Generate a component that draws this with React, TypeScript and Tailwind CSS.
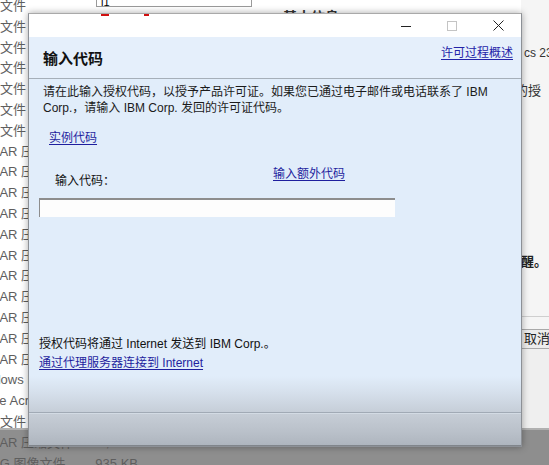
import React from "react";

type Row = { name: string; shift: string; size?: string };

const rows: Row[] = [
  ...Array.from({ length: 7 }, () => ({ name: "文件", shift: "ml-0" })),
  ...Array.from({ length: 11 }, () => ({ name: "RAR 压缩文件", shift: "ml-[-10px]" })),
  { name: "Windows Installer", shift: "ml-[-29px]" },
  { name: "Adobe Acrobat", shift: "ml-[-31px]" },
  { name: "文件", shift: "ml-0" },
  { name: "RAR 压缩文件", shift: "ml-[-10px]", size: "38,000 KB" },
  { name: "JPEG 图像文件", shift: "ml-[-24px]", size: "935 KB" },
];

function TitleButtons() {
  return (
    <div className="flex h-[23px] bg-white">
      <div className="relative flex-1">
        <span className="block ml-[72px] mt-[0px] h-[2px] w-[8px] bg-[#d01010]" />
        <span className="block ml-[115px] mt-[-2px] h-[2px] w-[5px] bg-[#d01010]" />
      </div>
      <div className="w-[46px] flex items-center justify-center">
        <svg width="10" height="10" viewBox="0 0 10 10">
          <line x1="0" y1="5.5" x2="10" y2="5.5" stroke="#222" strokeWidth="1" />
        </svg>
      </div>
      <div className="w-[46px] flex items-center justify-center">
        <svg width="10" height="10" viewBox="0 0 10 10">
          <rect x="0.5" y="0.5" width="9" height="9" fill="none" stroke="#c4c4c4" strokeWidth="1" />
        </svg>
      </div>
      <div className="w-[46px] flex items-center justify-center">
        <svg width="11" height="11" viewBox="0 0 11 11">
          <path d="M0.5 0.5 L10.5 10.5 M10.5 0.5 L0.5 10.5" stroke="#222" strokeWidth="1" />
        </svg>
      </div>
    </div>
  );
}

export default function App() {
  return (
    <div className="relative w-[549px] h-[465px] overflow-hidden bg-[#8e8e8e] font-['Liberation_Sans','Noto_Sans_CJK_SC',sans-serif]">
      {/* background explorer window */}
      <div className="flex h-[430px] max-h-[430px] bg-white border-b-2 border-[#b0b0b0]">
        <div className="w-[96px] h-[430px] flex flex-col mt-[-4px] text-[13px] leading-[20.8px] text-[#5e5e5e] whitespace-nowrap">
          {rows.map((r, i) => (
            <div key={i} className="flex h-[20.8px] shrink-0">
              <span className={`${r.shift} w-[96px] shrink-0`}>{r.name}</span>
              {r.size ? (
                <span className="w-[66px] shrink-0 text-right">{r.size}</span>
              ) : null}
            </div>
          ))}
        </div>
        <div className="w-[156px] flex flex-col">
          <div className="h-[7px] border-x border-b border-[#9a9a9a] bg-white pl-[4px] text-[11px] leading-[5px] text-black overflow-hidden">
            i1
          </div>
        </div>
        <div className="flex-1 pl-[31px] pt-[9px] text-[14px] leading-[16px] font-bold text-[#333]">
          基本信息
        </div>
        <div className="w-[28px] flex flex-col bg-[#f5f5f5] text-[12px] leading-[16px] text-[#333] whitespace-nowrap overflow-hidden">
          <div className="pt-[45px] pl-[3px]">cs 23 ‹</div>
          <div className="mt-[22px] ml-[-6px] text-[13px]">的授</div>
          <div className="mt-[155px] text-[13px] font-bold text-[#222]">醒。</div>
          <div className="mt-[46px] h-[13px] border-t border-[#cfcfcf]" />
          <div className="h-[20px] border-y border-[#a9a9a9] bg-[#ececec] pl-[3px] text-[13px] leading-[18px] text-[#222]">
            取消
          </div>
          <div className="flex-1 bg-[#efefef]" />
        </div>
      </div>

      {/* license dialog window */}
      <div className="absolute left-[28px] top-[13px] w-[494px] h-[434px] flex flex-col border border-[#8c9096] border-t-[#a9a9a9] shadow-[0_0_7px_rgba(0,0,0,0.35)]">
        <TitleButtons />
        <div className="h-[42px] shrink-0 flex justify-between bg-[#e5effb] border-b border-[#a6afb9] pl-[14px] pr-[8px]">
          <div className="pt-[12px] text-[15px] leading-[20px] font-bold text-[#111]">输入代码</div>
          <a className="pt-[8px] text-[12px] leading-[16px] text-[#2323a8] underline underline-offset-2">
            许可过程概述
          </a>
        </div>
        <div className="flex-1 flex flex-col bg-[#e1edfa] pl-[10px] text-[12px] leading-[16px] text-[#1b1b1b]">
          <p className="ml-[4px] mt-[5px] whitespace-nowrap">
            请在此输入授权代码，以授予产品许可证。如果您已通过电子邮件或电话联系了 IBM
            <br />
            Corp.，请输入 IBM Corp. 发回的许可证代码。
          </p>
          <a className="ml-[10px] mt-[14px] w-fit text-[#1f1f9e] underline underline-offset-2">实例代码</a>
          <div className="flex mt-[20px]">
            <div className="ml-[16px] w-[218px] pt-[7px] text-[#111]">输入代码：</div>
            <a className="w-fit text-[#1f1f9e] underline underline-offset-2">输入额外代码</a>
          </div>
          <div className="mt-[9px] w-[356px] h-[19px] bg-[#fdfdfd] border-t-2 border-l border-[#8d8d8d]" />
          <p className="mt-[119px] whitespace-nowrap text-[#111]">授权代码将通过 Internet 发送到 IBM Corp.。</p>
          <a className="mt-[3px] w-fit text-[#1f1f9e] underline underline-offset-2">通过代理服务器连接到 Internet</a>
        </div>
        <div className="h-[36px] shrink-0 bg-[linear-gradient(to_bottom,#e1edfa_0%,#d6e0ec_45%,#c6ced8_100%)]" />
        <div className="h-px shrink-0 bg-[#a1aab5]" />
        <div className="h-px shrink-0 bg-[#d3dbe4]" />
        <div className="flex-1 max-h-[32px] min-h-[32px] bg-[linear-gradient(to_bottom,#c6cdd6_0%,#b9c0c9_60%,#aeb5be_100%)] border-b border-[#80858b]" />
      </div>
    </div>
  );
}
